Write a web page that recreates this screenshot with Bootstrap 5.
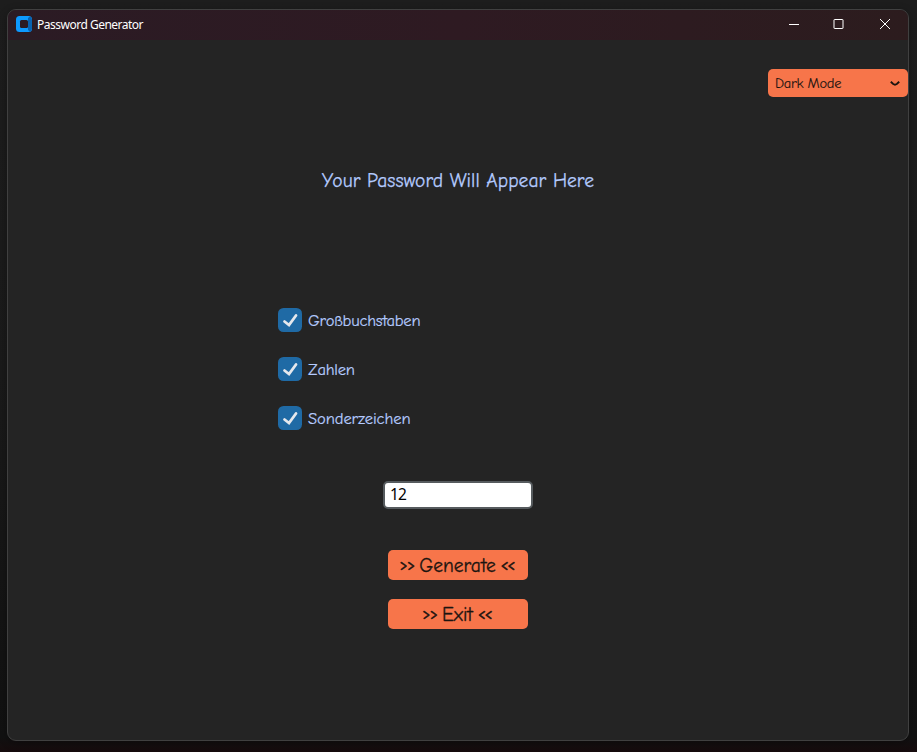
<!DOCTYPE html>
<html lang="en" data-bs-theme="dark">
<head>
<meta charset="utf-8">
<meta name="viewport" content="width=device-width, initial-scale=1">
<title>Password Generator</title>
<link href="https://cdn.jsdelivr.net/npm/bootstrap@5.3.0/dist/css/bootstrap.min.css" rel="stylesheet">
<style>
  body { height: 752px; padding: 9px 8px 11px 7px; overflow: hidden; background: linear-gradient(#1d1d1d, #1a1a1a 50%, #111 98%, #160b0d); font-family: "Comic Sans MS", "Comic Neue", Lato, sans-serif; }
  .app-window { border: 1px solid #404040; border-radius: 9px; background: #242424; box-shadow: 0 2px 8px rgba(0,0,0,.3); }
  .title-bar { height: 30px; padding-left: 8px; background: linear-gradient(90deg, #2b1b24, #2e1a22 50%, #2c1c1e); }
  .app-logo { margin-bottom: 2px; }
  .title-text { font: 12px/16px "Segoe UI", "Noto Sans", sans-serif; color: #fff; margin-left: 5px; letter-spacing: -.5px; }
  .win-btn { width: 45.5px; height: 30px; }
  .orange { background: #f7754a; color: #1b1410; border-radius: 5px; border: 0; }
  .mode-menu { width: 140px; height: 28px; margin-top: 29px; padding: 1px 8px 0 7px; font-size: 14.5px; letter-spacing: -.32px; -webkit-text-stroke: .1px; }
  .headline { margin-top: 70px; height: 27px; line-height: 27px; font-size: 19.5px; color: #b4cbff; -webkit-text-stroke: .25px; }
  .headline span { letter-spacing: .06px; }
  .options { margin: 114px 0 0 270px; gap: 25px; }
  .option { height: 24px; gap: 6px; font-size: 16.5px; line-height: 26px; color: #b4cbff; letter-spacing: -.22px; -webkit-text-stroke: .2px; }
  .t-sonder { letter-spacing: -.08px; }
  .length-box { width: 150px; height: 28px; margin-top: 51px; padding: 0 5px 2px; background: #fff; color: #000; border: 2px solid #565b5e; border-radius: 5px; font: 15.5px/22px "Noto Sans", sans-serif; letter-spacing: -.8px; }
  .action { width: 140px; height: 30px; padding: 0 2px 0 0; font-size: 19.5px; line-height: 31px; -webkit-text-stroke: .3px; }
  .action > span { gap: 5px; }
  .chev { font-size: 15px; letter-spacing: -.8px; -webkit-text-stroke: .5px; }
  .actions { margin-top: 41px; gap: 19px; }
</style>
</head>
<body>
<main class="app-window d-flex flex-column h-100 overflow-hidden">
  <header class="title-bar d-flex align-items-center flex-shrink-0">
    <svg class="app-logo" width="16" height="16" viewBox="0 0 16 16"><rect width="16" height="16" rx="3.5" fill="#0d99ff"/><path d="M12 2l2-1.6A3.500 3.500 0 0 1 16 3.500v9a3.500 3.500 0 0 1-2 3.200L12 14z" fill="#0862b0"/><rect x="4" y="4" width="8" height="8" rx="1.5" fill="#2b1b24"/></svg>
    <span class="title-text">Password Generator</span>
    <div class="d-flex ms-auto">
      <span class="win-btn"><svg width="45" height="30" fill="none" stroke="#fff"><path d="M17 14.500h10"/></svg></span>
      <span class="win-btn"><svg width="45" height="30" fill="none" stroke="#fff"><rect x="17" y="9.500" width="9" height="9" rx=".5"/></svg></span>
      <span class="win-btn"><svg width="45" height="30" fill="none" stroke="#fff"><path d="M17 9l10 10m0-10l-10 10"/></svg></span>
    </div>
  </header>
  <button class="mode-menu orange d-flex align-items-center justify-content-between ms-auto flex-shrink-0"><span>Dark Mode</span>
    <svg width="10" height="6" fill="none" stroke="#1b1410" stroke-width="1.900"><path d="M.8.800l2.400 2.200 1.800.8 1.800-.8 2.400-2.200"/></svg>
  </button>
  <div class="headline text-center"><span>Your Password Will Appear Here</span></div>
  <div class="options d-flex flex-column">
    <label class="option d-flex"><svg width="24" height="24"><rect width="24" height="24" rx="5.500" fill="#1f6aa5"/><path d="M6.500 13.500l4.500 3.500 7-9.500" fill="none" stroke="#e5e8ed" stroke-width="2.800" stroke-linecap="round"/></svg><span>Großbuchstaben</span></label>
    <label class="option d-flex"><svg width="24" height="24"><rect width="24" height="24" rx="5.500" fill="#1f6aa5"/><path d="M6.500 13.500l4.500 3.500 7-9.500" fill="none" stroke="#e5e8ed" stroke-width="2.800" stroke-linecap="round"/></svg><span>Zahlen</span></label>
    <label class="option d-flex"><svg width="24" height="24"><rect width="24" height="24" rx="5.500" fill="#1f6aa5"/><path d="M6.500 13.500l4.500 3.500 7-9.500" fill="none" stroke="#e5e8ed" stroke-width="2.800" stroke-linecap="round"/></svg><span class="t-sonder">Sonderzeichen</span></label>
  </div>
  <input class="length-box mx-auto" type="text" value="12" aria-label="Password length">
  <div class="actions d-flex flex-column align-items-center">
    <button class="action orange"><span class="d-flex justify-content-center"><span class="chev">&gt;&gt;</span><span>Generate</span><span class="chev">&lt;&lt;</span></span></button>
    <button class="action orange"><span class="d-flex justify-content-center"><span class="chev">&gt;&gt;</span><span>Exit</span><span class="chev">&lt;&lt;</span></span></button>
  </div>
</main>
<script src="https://cdn.jsdelivr.net/npm/bootstrap@5.3.0/dist/js/bootstrap.bundle.min.js"></script>
</body>
</html>
